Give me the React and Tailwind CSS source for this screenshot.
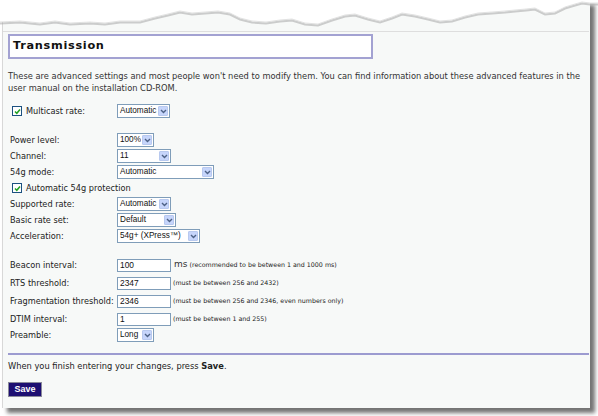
import React from "react";

const body = { fontFamily: '"DejaVu Sans", Verdana, sans-serif' };
const arial = { fontFamily: '"Liberation Sans", Arial, sans-serif' };

const tear = [
  [0, 22], [20, 21], [40, 23], [55, 21], [70, 23], [90, 22], [105, 23], [120, 21], [140, 21],
  [155, 17], [168, 14], [180, 11], [192, 13], [205, 12], [218, 11], [230, 13], [240, 18],
  [252, 21], [266, 22], [280, 20], [292, 19], [305, 23], [318, 24], [332, 19], [345, 15],
  [355, 14], [368, 18], [380, 21], [392, 17], [402, 13], [415, 15], [428, 18], [440, 21],
  [452, 20], [465, 16], [478, 13], [492, 12], [505, 11], [515, 10], [526, 9], [535, 8],
  [545, 13], [555, 12], [565, 7], [575, 4], [582, 2], [590, 3], [598, 3],
];

const TornEdge = () => {
  const pts = tear.map(([x, y]) => `${x},${y}`).join(" ");
  const shadow = tear.map(([x, y]) => `${x},${y + 1.5}`).join(" ");
  return (
    <svg className="absolute left-0 top-0" width="598" height="30" viewBox="0 0 598 30">
      <polyline points={shadow} fill="none" stroke="#a0a0a0" strokeWidth="2" opacity="0.5" />
      <polygon points={`0,0 ${pts} 598,0`} fill="#ffffff" />
      <polyline points={pts} fill="none" stroke="#dadada" strokeWidth="0.8" />
    </svg>
  );
};

const Chevron = () => (
  <svg width="7" height="5" viewBox="0 0 7 5">
    <path d="M1 1 L3.5 3.5 L6 1" fill="none" stroke="#4d6185" strokeWidth="1.4" />
  </svg>
);

const Select = ({ value, width }) => (
  <div
    className="flex h-[14px] items-stretch border border-[#7f9db9] bg-white"
    style={{ width }}
  >
    <span
      className="flex-1 overflow-hidden whitespace-nowrap pl-[2px] text-[8.2px] leading-[12px] text-[#111]"
      style={arial}
    >
      {value}
    </span>
    <span className="m-[1px] flex w-[10px] shrink-0 items-center justify-center rounded-[1px] border border-[#b8c9ef] bg-[#c6d5fb]">
      <Chevron />
    </span>
  </div>
);

const Input = ({ value }) => (
  <div className="flex h-[13px] w-[54px] items-center border border-[#7f9db9] bg-white pl-[2px] text-[8.4px] text-[#111]" style={arial}>
    {value}
  </div>
);

const Check = () => (
  <span className="flex h-[10px] w-[10px] items-center justify-center border border-[#1c5180] bg-white">
    <svg width="7" height="7" viewBox="0 0 7 7">
      <path d="M1 3.5 L2.8 5.3 L6 1.5" fill="none" stroke="#21a121" strokeWidth="1.5" />
    </svg>
  </span>
);

const Row = ({ label, children, h = "h-[16px]" }) => (
  <div className={`flex items-center pl-[2px] ${h}`}>
    <span className="w-[107px] shrink-0 whitespace-nowrap text-[8.2px] text-[#222]">{label}</span>
    {children}
  </div>
);

const Note = ({ children }) => (
  <span className="ml-[2px] whitespace-nowrap text-[6.3px] text-[#222]">{children}</span>
);

export default function App() {
  return (
    <div className="relative h-[416px] w-[598px] overflow-hidden bg-white" style={body}>
      <div className="ml-[2px] h-[408px] w-[588px] border-l border-[#d8d8d8] bg-[#f7f9f8] shadow-[5px_5px_4px_rgba(0,0,0,0.55)]">
        <div className="h-[31px]" />
        <div className="mr-[1px] border-t border-[#dedede]" />
        <div className="pl-[5px]">
          <div className="mt-[2px] flex h-[25px] w-[365px] items-center border-2 border-[#a3a2d2] bg-white pl-[3px]">
            <span className="text-[11.3px] font-bold tracking-[0.7px] text-[#111]">Transmission</span>
          </div>

          <p className="mt-[11px] w-[578px] text-[8.3px] leading-[12px] text-[#333]">
            These are advanced settings and most people won't need to modify them. You can find information about these advanced features in the user manual on the installation CD-ROM.
          </p>

          <div className="mt-[9px] flex h-[16px] items-center pl-[4px]">
            <Check />
            <span className="ml-[4px] w-[91px] text-[8.2px] text-[#222]">Multicast rate:</span>
            <Select value="Automatic" width={53} />
          </div>

          <div className="mt-[13px]">
            <Row label="Power level:"><Select value="100%" width={37} /></Row>
            <Row label="Channel:"><Select value="11" width={54} /></Row>
            <Row label="54g mode:"><Select value="Automatic" width={97} /></Row>
            <div className="flex h-[16px] items-center pl-[4px]">
              <Check />
              <span className="ml-[4px] text-[8.2px] text-[#222]">Automatic 54g protection</span>
            </div>
            <Row label="Supported rate:"><Select value="Automatic" width={54} /></Row>
            <Row label="Basic rate set:"><Select value="Default" width={59} /></Row>
            <Row label="Acceleration:"><Select value="54g+ (XPress™)" width={83} /></Row>
          </div>

          <div className="mt-[12px]">
            <Row label="Beacon interval:" h="h-[18px]">
              <Input value="100" />
              <span className="ml-[3px] text-[9px] text-[#333]">ms</span>
              <Note>(recommended to be between 1 and 1000 ms)</Note>
            </Row>
            <Row label="RTS threshold:" h="h-[18px]">
              <Input value="2347" />
              <Note>(must be between 256 and 2432)</Note>
            </Row>
            <Row label="Fragmentation threshold:" h="h-[18px]">
              <Input value="2346" />
              <Note>(must be between 256 and 2346, even numbers only)</Note>
            </Row>
            <Row label="DTIM interval:" h="h-[18px]">
              <Input value="1" />
              <Note>(must be between 1 and 255)</Note>
            </Row>
            <Row label="Preamble:" h="h-[14px]">
              <Select value="Long" width={37} />
            </Row>
          </div>

          <div className="mr-[1px] mt-[11px] border-t-2 border-[#9c9bd0]" />
          <p className="mt-[5px] text-[8.3px] leading-[12px] text-[#222]">
            When you finish entering your changes, press <b>Save</b>.
          </p>
          <button
            type="button"
            className="mt-[10px] flex h-[15px] w-[34px] items-center justify-center border border-[#8a8a9a] bg-[#1d0f72] text-[9px] font-bold text-white"
            style={arial}
          >
            Save
          </button>
        </div>
      </div>
      <TornEdge />
    </div>
  );
}
